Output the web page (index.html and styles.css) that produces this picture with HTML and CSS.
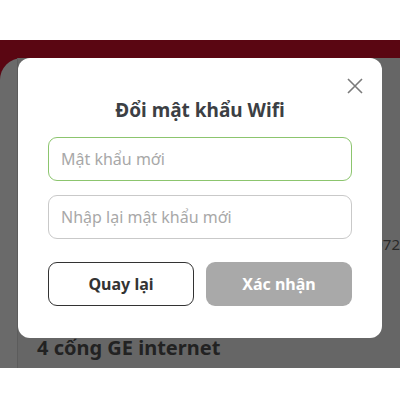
FILE: index.html
```html
<!DOCTYPE html>
<html>
<head>
  <meta charset="UTF-8">
  <title>Đổi mật khẩu Wifi</title>
  <link rel="stylesheet" href="styles.css">
</head>
<body>
  <div class="screen">
    <div class="header"></div>
    <div class="sheet">
      <div class="card">
        <div class="info-row">0972</div>
        <div class="port-title">4 cống GE internet</div>
        <div class="port-sub">Tốc độ tối đa 1Gbps</div>
      </div>
    </div>

    <div class="modal">
      <button class="close" type="button" aria-label="Đóng">
        <svg width="16" height="16" viewBox="0 0 16 16">
          <path d="M1 1 L15 15 M15 1 L1 15" stroke="#7a7a7a" stroke-width="1.6" fill="none"/>
        </svg>
      </button>
      <h2 class="modal-title">Đổi mật khẩu Wifi</h2>
      <div class="fields">
        <input class="field active" type="password" placeholder="Mật khẩu mới">
        <input class="field" type="password" placeholder="Nhập lại mật khẩu mới">
      </div>
      <div class="actions">
        <button class="btn btn-back" type="button">Quay lại</button>
        <button class="btn btn-confirm" type="button" disabled>Xác nhận</button>
      </div>
    </div>
  </div>
</body>
</html>
```

FILE: styles.css
```css
:root {
  --text: #3c3f44;
  --green: #8cc56e;
  --border: #c9c9c9;
  --muted: #a9a9a9;
  --overlay: #666666;
}

body {
  margin: 0;
  background: white;
  font-family: 'Noto Sans', 'Open Sans', sans-serif;
}

.screen {
  margin-top: 40px;
  height: 328px;
  position: relative;
  overflow: hidden;
  background: #5a0612;
}

.header {
  height: 18px;
}

.sheet {
  height: 310px;
  background: #6a6a6a;
  border-radius: 22px 0 0 0;
  padding-left: 17px;
}

.card {
  height: 100%;
  background: var(--overlay);
  border-left: 1px solid #5c5c5c;
  padding: 176px 0 0 19px;
}

.info-row {
  text-align: right;
  font-size: 15px;
  color: #2a2a2a;
  height: 101px;
}

.port-title {
  font-weight: 700;
  font-size: 20px;
  color: #222;
  line-height: 26px;
}

.port-sub {
  margin-top: 4px;
  font-size: 15px;
  color: #333;
}

.modal {
  position: absolute;
  top: 18px;
  left: 18px;
  width: 364px;
  box-sizing: border-box;
  padding: 38px 30px 32px;
  background: white;
  border-radius: 12px;
}

.close {
  position: absolute;
  top: 20px;
  right: 19px;
  padding: 0;
  border: none;
  background: none;
  line-height: 0;
}

.modal-title {
  margin: 0 0 13px;
  text-align: center;
  font-size: 19px;
  line-height: 28px;
  font-weight: 700;
  color: var(--text);
}

.fields {
  display: flex;
  flex-direction: column;
  gap: 14px;
}

.field {
  height: 44px;
  box-sizing: border-box;
  padding: 0 12px;
  border: 1px solid var(--border);
  border-radius: 9px;
  font-family: 'Noto Sans', sans-serif;
  font-size: 16px;
  outline: none;
}

.field::placeholder {
  color: #a8a8a8;
}

.field.active {
  border-color: var(--green);
}

.actions {
  display: grid;
  grid-template-columns: 1fr 1fr;
  gap: 12px;
  margin-top: 23px;
}

.btn {
  height: 44px;
  border-radius: 9px;
  font-family: 'Noto Sans', sans-serif;
  font-size: 16px;
  font-weight: 700;
}

.btn-back {
  background: white;
  border: 1px solid #333;
  color: #333;
}

.btn-confirm {
  background: var(--muted);
  border: none;
  color: white;
}
```
